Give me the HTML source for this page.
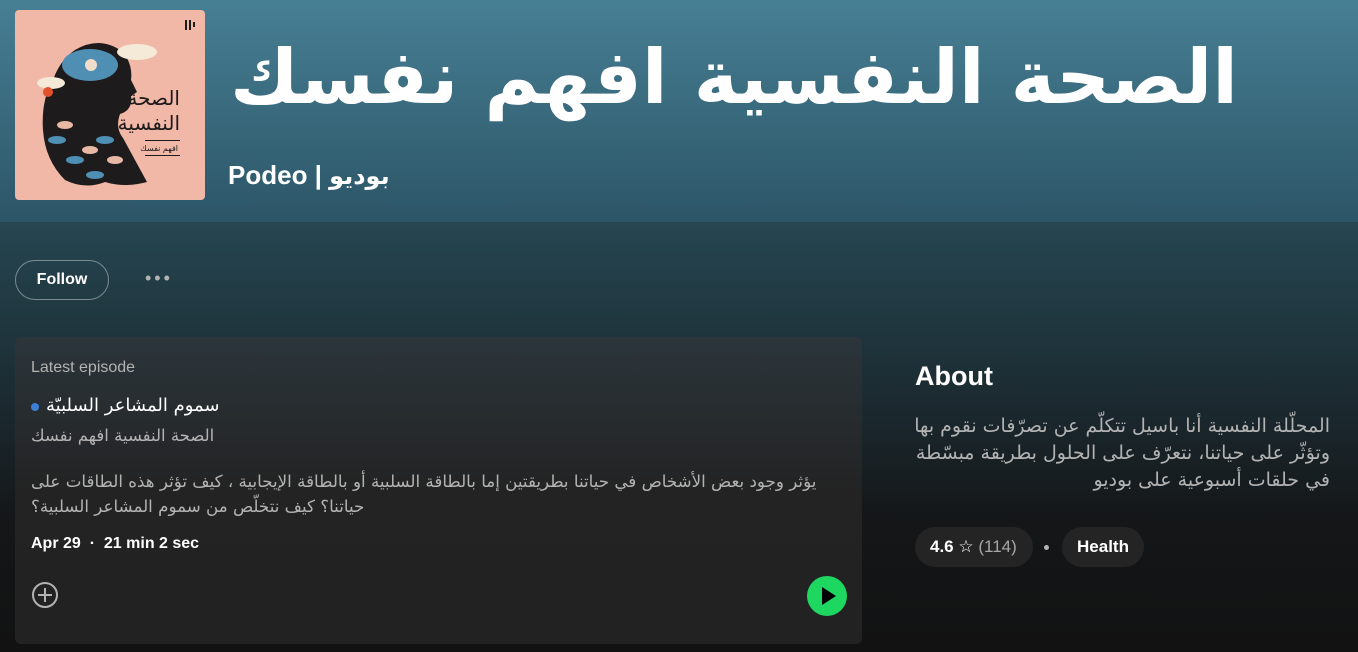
<!DOCTYPE html>
<html><head><meta charset="utf-8"><style>
*{margin:0;padding:0;box-sizing:border-box}
body{width:1358px;height:652px;overflow:hidden;background:#121212;font-family:"Liberation Sans","DejaVu Sans",sans-serif;color:#fff;position:relative}
.hdr{position:absolute;left:0;top:0;width:1358px;height:222px;background:linear-gradient(#477f94,#2c5567)}
.low{position:absolute;left:0;top:222px;width:1358px;height:430px;background:linear-gradient(#264651 0px,#1d2f36 150px,#141618 300px,#121212 430px)}
.abs{position:absolute}
.ar{font-family:"DejaVu Sans",sans-serif;direction:rtl}
</style></head><body>
<div class="hdr"></div><div class="low"></div>
<svg class="abs" style="left:15px;top:10px" width="190" height="190" viewBox="0 0 190 190">
<rect width="190" height="190" rx="4" fill="#f1b7a7"/>
<path d="M60 40 Q85 25 108 42 Q118 55 116 70 L122 82 L116 86 Q118 100 105 104 Q100 118 108 128 Q120 150 132 172 Q110 178 90 172 Q70 180 50 170 Q30 150 28 120 Q26 90 38 70 Q45 50 60 40Z" fill="#1e1b1c"/>
<ellipse cx="75" cy="55" rx="28" ry="16" fill="#4f8fb3"/>
<circle cx="76" cy="55" r="6" fill="#f2ddc8"/>
<ellipse cx="122" cy="42" rx="20" ry="8" fill="#f5ead8"/>
<ellipse cx="36" cy="73" rx="14" ry="6" fill="#f5ead8"/>
<circle cx="33" cy="82" r="5" fill="#e0522b"/>
<g fill="#4f8fb3"><ellipse cx="42" cy="130" rx="9" ry="4"/><ellipse cx="60" cy="150" rx="9" ry="4"/><ellipse cx="80" cy="165" rx="9" ry="4"/><ellipse cx="90" cy="130" rx="9" ry="4"/></g>
<g fill="#e8b8a4"><ellipse cx="50" cy="115" rx="8" ry="4"/><ellipse cx="75" cy="140" rx="8" ry="4"/><ellipse cx="100" cy="150" rx="8" ry="4"/></g>
<text x="165" y="95" font-size="20" fill="#1e1b1c" text-anchor="end" font-family="DejaVu Sans">الصحة</text>
<text x="165" y="120" font-size="20" fill="#1e1b1c" text-anchor="end" font-family="DejaVu Sans">النفسية</text>
<rect x="130" y="130" width="35" height="1" fill="#1e1b1c"/>
<text x="163" y="141" font-size="8" fill="#1e1b1c" text-anchor="end" font-family="DejaVu Sans">افهم نفسك</text>
<rect x="130" y="145" width="35" height="1" fill="#1e1b1c"/>
<rect x="170" y="10" width="2" height="10" fill="#1e1b1c"/><rect x="174" y="10" width="2" height="10" fill="#1e1b1c"/><rect x="178" y="12" width="2" height="5" fill="#1e1b1c"/>
</svg>
<div class="abs ar" style="left:200px;top:27px;width:1038px;text-align:right;font-size:75px;font-weight:bold;line-height:100px;white-space:nowrap">الصحة النفسية افهم نفسك</div>
<div class="abs" style="left:228px;top:160px;font-size:26px;font-weight:bold;white-space:nowrap">Podeo | <span class="ar" style="font-size:24px">بوديو</span></div>
<div class="abs" style="left:15px;top:260px;width:94px;height:40px;border:1px solid #7b8a90;border-radius:20px;font-size:16px;font-weight:bold;text-align:center;line-height:38px">Follow</div>
<div class="abs" style="left:145px;top:268px;font-size:18px;letter-spacing:3px;color:#b3b3b3">•••</div>
<div class="abs" style="left:15px;top:337px;width:847px;height:307px;border-radius:6px;background:linear-gradient(#2b353b,#232323 50%,#222)"></div>
<div class="abs" style="left:31px;top:359px;font-size:16px;color:#b3b3b3">Latest episode</div>
<div class="abs" style="left:31px;top:403px;width:8px;height:8px;border-radius:50%;background:#3d7fd6"></div>
<div class="abs ar" style="left:46px;top:395px;font-size:18px;direction:ltr">سموم المشاعر السلبيّة</div>
<div class="abs ar" style="left:31px;top:426px;font-size:16.5px;color:#b3b3b3;direction:ltr">الصحة النفسية افهم نفسك</div>
<div class="abs ar" style="left:31px;top:469px;font-size:16.7px;color:#b3b3b3;line-height:25px;text-align:left;direction:rtl;width:810px">يؤثر وجود بعض الأشخاص في حياتنا بطريقتين إما بالطاقة السلبية أو بالطاقة الإيجابية ، كيف تؤثر هذه الطاقات على حياتنا؟ كيف نتخلّص من سموم المشاعر السلبية؟</div>
<div class="abs" style="left:31px;top:535px;font-size:16px;font-weight:bold">Apr 29 &nbsp;·&nbsp; 21 min 2 sec</div>
<svg class="abs" style="left:31px;top:581px" width="28" height="28" viewBox="0 0 28 28"><circle cx="14" cy="14" r="12" fill="none" stroke="#b3b3b3" stroke-width="2"/><path d="M14 7v14M7 14h14" stroke="#b3b3b3" stroke-width="2"/></svg>
<svg class="abs" style="left:807px;top:576px" width="40" height="40" viewBox="0 0 40 40"><circle cx="20" cy="20" r="20" fill="#1ed760"/><path d="M15 11L29 20L15 29Z" fill="#000"/></svg>
<div class="abs" style="left:915px;top:361px;font-size:27px;font-weight:bold">About</div>
<div class="abs ar" style="left:912px;top:413px;font-size:19px;line-height:27px;color:#b3b3b3;text-align:right;direction:rtl;width:418px">المحلّلة النفسية أنا باسيل تتكلّم عن تصرّفات نقوم بها وتؤثّر على حياتنا، نتعرّف على الحلول بطريقة مبسّطة في حلقات أسبوعية على بوديو</div>
<div class="abs" style="left:915px;top:527px;width:118px;height:40px;border-radius:20px;background:#242424;font-size:17px;line-height:40px;padding-left:15px;font-weight:bold">4.6 <span style="font-weight:normal">☆</span> <span style="color:#a7a7a7;font-weight:normal">(114)</span></div>
<div class="abs" style="left:1044px;top:545px;width:5px;height:5px;border-radius:50%;background:#b3b3b3"></div>
<div class="abs" style="left:1062px;top:527px;width:82px;height:40px;border-radius:20px;background:#242424;font-size:17px;line-height:40px;text-align:center;font-weight:bold">Health</div>
</body></html>
